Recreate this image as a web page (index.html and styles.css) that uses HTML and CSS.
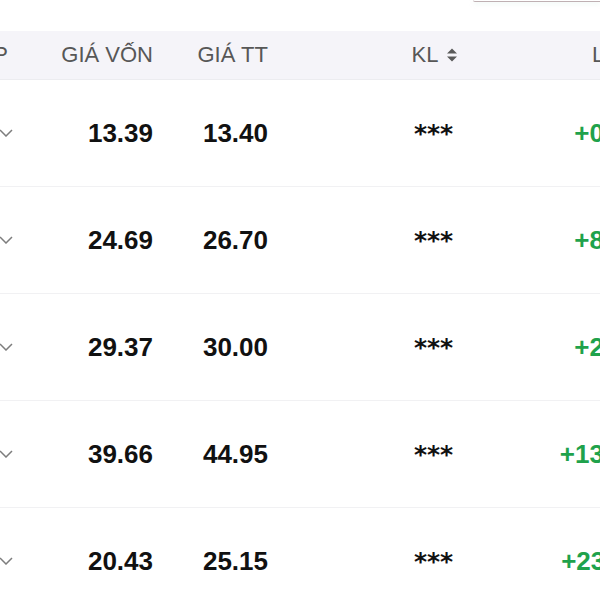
FILE: index.html
```html
<!DOCTYPE html>
<html lang="vi">
<head>
<meta charset="utf-8">
<link rel="stylesheet" href="styles.css">
</head>
<body>
<div class="topbar"><div class="tab-edge"></div></div>
<div class="table">
  <div class="row head">
    <div class="c sym">MÃ CP</div>
    <div class="c num">GIÁ VỐN</div>
    <div class="c num">GIÁ TT</div>
    <div class="c kl">KL <svg class="sort" width="12" height="16" viewBox="0 0 12 16"><path d="M6 1.5 L11 6.5 H1 Z M6 14.5 L11 9.5 H1 Z" fill="#5a5a5a"/></svg></div>
    <div class="c pl">LÃI/LỖ</div>
  </div>
  <div class="row">
    <div class="c sym"><span class="code">ACB</span><svg class="chev" width="14" height="8" viewBox="0 0 14 8"><path d="M1 1 L7 7 L13 1" fill="none" stroke="#7d7d7d" stroke-width="1.5"/></svg></div>
    <div class="c num v">13.39</div>
    <div class="c num v">13.40</div>
    <div class="c kl v mask">***</div>
    <div class="c pl up"><span>+0.01</span></div>
  </div>
  <div class="row">
    <div class="c sym"><span class="code">FPT</span><svg class="chev" width="14" height="8" viewBox="0 0 14 8"><path d="M1 1 L7 7 L13 1" fill="none" stroke="#7d7d7d" stroke-width="1.5"/></svg></div>
    <div class="c num v">24.69</div>
    <div class="c num v">26.70</div>
    <div class="c kl v mask">***</div>
    <div class="c pl up"><span>+8.14</span></div>
  </div>
  <div class="row">
    <div class="c sym"><span class="code">HPG</span><svg class="chev" width="14" height="8" viewBox="0 0 14 8"><path d="M1 1 L7 7 L13 1" fill="none" stroke="#7d7d7d" stroke-width="1.5"/></svg></div>
    <div class="c num v">29.37</div>
    <div class="c num v">30.00</div>
    <div class="c kl v mask">***</div>
    <div class="c pl up"><span>+2.14</span></div>
  </div>
  <div class="row">
    <div class="c sym"><span class="code">MWG</span><svg class="chev" width="14" height="8" viewBox="0 0 14 8"><path d="M1 1 L7 7 L13 1" fill="none" stroke="#7d7d7d" stroke-width="1.5"/></svg></div>
    <div class="c num v">39.66</div>
    <div class="c num v">44.95</div>
    <div class="c kl v mask">***</div>
    <div class="c pl up"><span>+13.34</span></div>
  </div>
  <div class="row">
    <div class="c sym"><span class="code">VCB</span><svg class="chev" width="14" height="8" viewBox="0 0 14 8"><path d="M1 1 L7 7 L13 1" fill="none" stroke="#7d7d7d" stroke-width="1.5"/></svg></div>
    <div class="c num v">20.43</div>
    <div class="c num v">25.15</div>
    <div class="c kl v mask">***</div>
    <div class="c pl up"><span>+23.11</span></div>
  </div>
</div>
</body>
</html>
```

FILE: styles.css
```css
html, body {
  margin: 0;
  padding: 0;
  background: #ffffff;
  overflow: hidden;
  width: 600px;
  height: 600px;
}
body {
  font-family: "Liberation Sans", Arial, sans-serif;
}
.topbar {
  height: 31px;
  display: flex;
  justify-content: flex-end;
}
.tab-edge {
  width: 127px;
  height: 1px;
  border-bottom: 1px solid #bfb0b3;
  border-bottom-left-radius: 4px;
  box-shadow: 0 2px 4px rgba(200, 230, 220, 0.35);
}
.table {
  width: 820px;
  margin-left: -100px;
}
.row {
  display: grid;
  grid-template-columns: 120px 133px 115px 330px 122px;
  height: 106px;
  align-items: center;
  border-bottom: 1px solid #f1f1f3;
}
.row.head {
  height: 48px;
  background: #f5f4f9;
  border-bottom: 1px solid #ececf0;
  font-size: 22px;
  color: #575757;
}
.c {
  white-space: nowrap;
}
.sym {
  display: flex;
  justify-content: flex-end;
  align-items: center;
  gap: 30px;
  padding-right: 8px;
}
.head .sym {
  padding-right: 12px;
}
.code {
  font-weight: 700;
  font-size: 24px;
}
.chev {
  display: block;
  margin-right: -1px;
}
.num {
  text-align: right;
}
.kl {
  text-align: center;
}
.head .kl {
  display: flex;
  justify-content: center;
  align-items: center;
  gap: 8px;
  padding-left: 4px;
}
.sort {
  display: block;
}
.pl {
  display: flex;
  justify-content: flex-end;
  padding-right: 80px;
}
.pl span {
  flex: none;
}
.v {
  font-size: 26px;
  font-weight: 700;
  color: #111111;
}
.mask {
  font-family: "DejaVu Sans", sans-serif;
  font-size: 25px;
  padding-left: 1px;
  position: relative;
  top: 0;
}
.up {
  font-size: 26px;
  font-weight: 700;
  color: #1fa24c;
}
.head .pl {
  display: block;
  text-align: left;
  padding-right: 0;
  text-indent: -6px;
}
```
